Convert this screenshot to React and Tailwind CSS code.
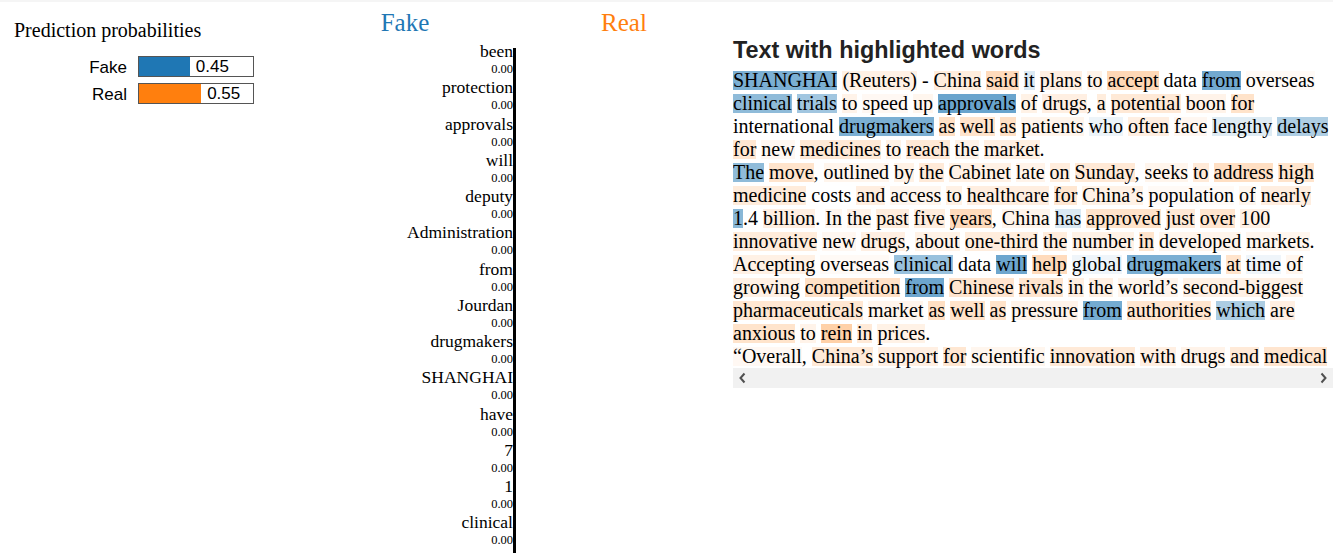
import { Fragment } from "react";

const probabilities = [
  { label: "Fake", value: 0.45, color: "bg-[#1f77b4]" },
  { label: "Real", value: 0.55, color: "bg-[#ff7f0e]" }
];

const features = [
  "been",
  "protection",
  "approvals",
  "will",
  "deputy",
  "Administration",
  "from",
  "Jourdan",
  "drugmakers",
  "SHANGHAI",
  "have",
  "7",
  "1",
  "clinical",
  "incomes"
];

// [word, weight, suffix] -- negative weight leans Fake (blue), positive leans Real (orange)
const paragraphs = [
  [
    ["SHANGHAI", -59], ["(Reuters)", 11], ["-", 0], ["China", 14], ["said", 28], ["it", -16], ["plans", 12],
    ["to", 9], ["accept", 30], ["data", 0], ["from", -63], ["overseas", 4],
    ["clinical", -50], ["trials", -42], ["to", 9], ["speed", 5], ["up", 7], ["approvals", -67], ["of", 10],
    ["drugs", 12, ","], ["a", 14], ["potential", 17], ["boon", 9], ["for", 22],
    ["international", 0], ["drugmakers", -59], ["as", 24], ["well", 21], ["as", 24], ["patients", 8],
    ["who", -8], ["often", 12], ["face", 6], ["lengthy", -14], ["delays", -36],
    ["for", 19], ["new", 6], ["medicines", 17], ["to", 10], ["reach", 17], ["the", 9], ["market", 12, "."]
  ],
  [
    ["The", -50], ["move", 21, ","], ["outlined", 8], ["by", 10], ["the", 16], ["Cabinet", 11], ["late", 9],
    ["on", 14], ["Sunday", 17, ","], ["seeks", 8], ["to", 16], ["address", 25], ["high", 21],
    ["medicine", 15], ["costs", 0], ["and", 13], ["access", 7], ["to", 11], ["healthcare", 13], ["for", 19],
    ["China’s", 10], ["population", 4], ["of", 7], ["nearly", 13],
    ["1", -53, ".4"], ["billion", 12, "."], ["In", 7], ["the", 9], ["past", 14], ["five", 14], ["years", 28, ","],
    ["China", 8], ["has", -16], ["approved", 22], ["just", 17], ["over", 20], ["100", 11],
    ["innovative", 15], ["new", 6], ["drugs", 12, ","], ["about", 10], ["one-third", 14], ["the", 14],
    ["number", 10], ["in", 21], ["developed", 8], ["markets", 7, "."],
    ["Accepting", 11], ["overseas", 4], ["clinical", -46], ["data", 0], ["will", -65], ["help", 28],
    ["global", -7], ["drugmakers", -59], ["at", 21], ["time", -7], ["of", 7],
    ["growing", 11], ["competition", 23], ["from", -65], ["Chinese", 20], ["rivals", 20], ["in", 13],
    ["the", 12], ["world’s", 8], ["second-biggest", 11],
    ["pharmaceuticals", 19], ["market", 8], ["as", 25], ["well", 22], ["as", 22], ["pressure", 9],
    ["from", -62], ["authorities", 20], ["which", -37], ["are", 12],
    ["anxious", 21], ["to", 9], ["rein", 36], ["in", 16], ["prices", 10, "."]
  ],
  [
    ["“Overall", 5, ","], ["China’s", 16], ["support", 12], ["for", 19], ["scientific", 7],
    ["innovation", 16], ["with", 12], ["drugs", 9], ["and", 16], ["medical", 20], ["devices", 11],
    ["will", -20], ["benefit", 10], ["patients", 8], ["and", 12], ["the", 7], ["industry", 14]
  ]
];

function Word({ text, weight, suffix }) {
  if (!weight) {
    return (
      <>
        {text}
        {suffix}
      </>
    );
  }
  const alpha = Math.abs(weight) / 100;
  const background = weight < 0 ? `rgba(31,119,180,${alpha})` : `rgba(255,127,14,${alpha})`;
  return (
    <span className="whitespace-nowrap">
      <span className="inline-block h-[19px] leading-[19px]" style={{ backgroundColor: background }}>
        {text}
      </span>
      {suffix}
    </span>
  );
}

function Chevron({ flip }) {
  return (
    <svg width="9" height="12" viewBox="0 0 9 12" className={flip ? "rotate-180" : ""}>
      <path d="M6.5 1.5 L2.5 6 L6.5 10.5" fill="none" stroke="#505050" strokeWidth="2" />
    </svg>
  );
}

export default function App() {
  return (
    <div className="h-[553px] w-[1333px] overflow-hidden bg-white text-black">
      <div className="h-[2px] w-full bg-[#f5f5f5]" />
      <div className="flex">
        <section className="w-[370px] shrink-0">
          <div className="ml-[14px] mt-[17px] font-['Liberation_Serif',serif] text-[20px] leading-[23px]">
            Prediction probabilities
          </div>
          <div className="mt-[14px] flex flex-col gap-[6px]">
            {probabilities.map((item) => (
              <div key={item.label} className="flex h-[21px] items-center">
                <div className="w-[127px] pt-[1px] text-right font-['Liberation_Sans',sans-serif] text-[17px] leading-[21px]">
                  {item.label}
                </div>
                <div className="ml-[11px] flex h-[21px] w-[116px] items-stretch border-[1.5px] border-[#555]">
                  <div className={item.color} style={{ width: `${item.value * 113}px` }} />
                  <div className="ml-[6px] pt-[1px] font-['Liberation_Sans',sans-serif] text-[17px] leading-[18px]">
                    {item.value.toFixed(2)}
                  </div>
                </div>
              </div>
            ))}
          </div>
        </section>

        <section className="w-[363px] shrink-0 font-['Liberation_Serif',serif]">
          <div className="mt-[6px] flex text-[25px] leading-[29px]">
            <div className="w-[70px] text-center text-[#1f77b4]">Fake</div>
            <div className="ml-[149px] w-[70px] text-center text-[#ff7f0e]">Real</div>
          </div>
          <div className="relative mt-[4px] w-[143px]">
            <div className="absolute left-[143px] top-[7px] h-[600px] w-[2.5px] bg-black" />
            {features.map((word) => (
              <div key={word} className="h-[36.25px] text-right">
                <div className="text-[17.5px] leading-[20px]">{word}</div>
                <div className="text-[12.5px] leading-[16.25px]">0.00</div>
              </div>
            ))}
          </div>
        </section>

        <section className="w-[600px] shrink-0">
          <h3 className="mt-[35px] font-['Liberation_Sans',sans-serif] text-[23.4px] font-bold leading-[27px] text-[#222]">
            Text with highlighted words
          </h3>
          <div className="mt-[5px] h-[299px] overflow-hidden font-['Liberation_Serif',serif] text-[20px] leading-[23px]">
            {paragraphs.map((tokens, p) => (
              <div key={p}>
                {tokens.map(([text, weight, suffix], i) => (
                  <Fragment key={i}>
                    {i > 0 ? " " : null}
                    <Word text={text} weight={weight} suffix={suffix} />
                  </Fragment>
                ))}
              </div>
            ))}
          </div>
          <div className="flex h-[20px] items-center justify-between bg-[#f1f1f1] px-[5px]">
            <Chevron />
            <Chevron flip />
          </div>
        </section>
      </div>
    </div>
  );
}
